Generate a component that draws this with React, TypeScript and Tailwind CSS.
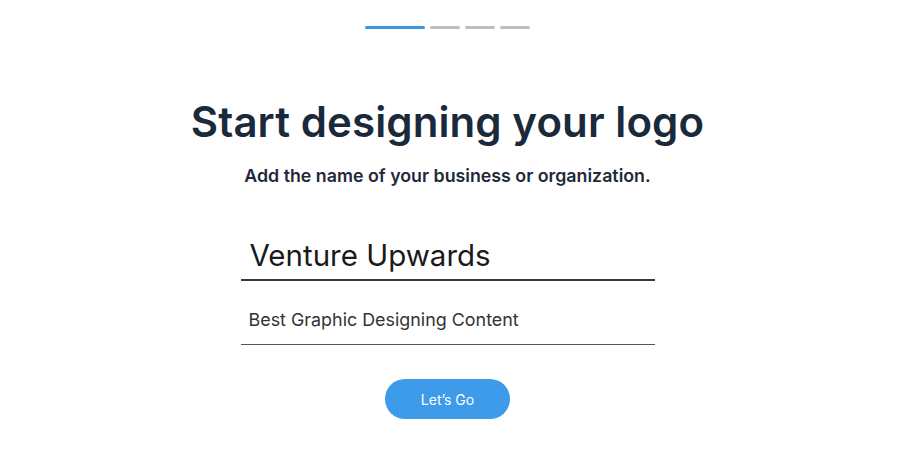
import React from "react";

export default function App() {
  return (
    <div
      className="w-[917px] h-[454px] bg-white flex flex-col items-center overflow-hidden pr-[22px]"
      style={{ fontFamily: "Inter, 'Noto Sans', sans-serif" }}
    >
      <div className="flex gap-[5px] mt-[26px]">
        <div className="w-[60px] h-[3px] bg-[#3b97e3] rounded-full" />
        <div className="w-[30px] h-[3px] bg-[#bdbdbd] rounded-full" />
        <div className="w-[30px] h-[3px] bg-[#bdbdbd] rounded-full" />
        <div className="w-[30px] h-[3px] bg-[#bdbdbd] rounded-full" />
      </div>
      <h1 className="mt-[68px] text-[42px] leading-[50px] font-semibold text-[#1a2a3a] tracking-[0.1px]">
        Start designing your logo
      </h1>
      <p className="mt-[18px] text-[17.8px] leading-[22px] font-semibold text-[#1e2a38]">
        Add the name of your business or organization.
      </p>
      <div className="mt-[50px] w-[414px] flex flex-col">
        <div className="border-b-2 border-[#3a3a3a] pl-[9px] pb-[6px]">
          <span className="text-[29.5px] leading-[36px] text-[#1a1a1a]">Venture Upwards</span>
        </div>
        <div className="border-b border-[#555] pl-[8px] pt-[27px] pb-[12px]">
          <span className="text-[17.9px] leading-[24px] text-[#333]">Best Graphic Designing Content</span>
        </div>
      </div>
      <button className="mt-[34px] w-[125px] h-[40px] rounded-full bg-[#3d9be9] text-white text-[14px] font-normal">
        Let’s Go
      </button>
    </div>
  );
}
